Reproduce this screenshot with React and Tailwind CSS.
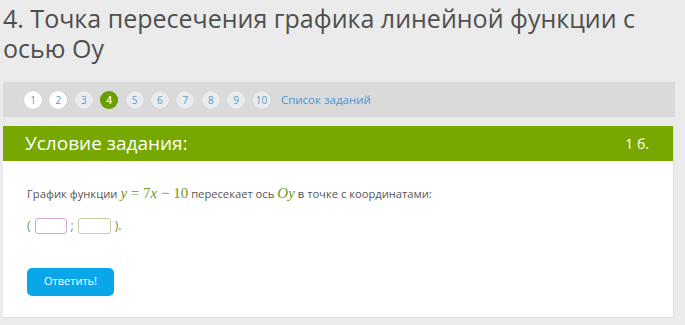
import React from "react";

const steps = [1, 2, 3, 4, 5, 6, 7, 8, 9, 10];

const Step = ({ n }) => {
  // current task = 4, already visited = 1, 2
  let cls = "bg-[#e9ecee] text-[#5b9bcb]";
  if (n === 4) cls = "bg-[#6a9e00] text-white font-semibold";
  else if (n <= 2) cls = "bg-white text-[#5b9bcb]";
  return (
    <div
      className={`w-[18px] h-[18px] rounded-full flex items-center justify-center text-[10px] leading-none shadow-[0_0_1px_rgba(0,0,0,0.15)] ${cls}`}
    >
      {n}
    </div>
  );
};

const M = ({ children }) => (
  <span className="text-[#6a9a1b] italic text-[15px] font-['Liberation_Serif',serif]">
    {children}
  </span>
);

const N = ({ children }) => (
  <span className="text-[#6a9a1b] text-[15px] font-['Liberation_Serif',serif]">
    {children}
  </span>
);

export default function App() {
  return (
    <div className="w-[685px] h-[325px] bg-[#ebebeb] font-['Open_Sans',sans-serif] text-[#555] overflow-hidden">
      {/* Title */}
      <h1 className="pl-[3px] pt-[3px] text-[25px] leading-[30px] text-[#4f4f4f]">
        4. Точка пересечения графика линейной функции с осью Oy
      </h1>

      {/* Task navigation */}
      <div className="mt-[19px] ml-[3px] w-[672px] h-[35px] bg-[#dadada] flex items-center pl-[21px] gap-[7.4px]">
        {steps.map((n) => (
          <Step key={n} n={n} />
        ))}
        <span className="ml-[3px] text-[11.5px] text-[#4d95cf]">Список заданий</span>
      </div>

      {/* Task card */}
      <div className="mt-[9px] ml-[3px] w-[671px] bg-white border-r border-b border-[#dcdcdc]">
        <div className="h-[35px] bg-[#77a800] flex items-center justify-between pl-[22px] pr-[24px] text-white">
          <span className="text-[19px]">Условие задания:</span>
          <span className="text-[14px]">1 б.</span>
        </div>
        <div className="pl-[24px] pt-[21px] pb-[21px] text-[11.2px]">
          <p className="flex items-baseline gap-[3px]">
            <span>График функции</span>
            <span>
              <M>y</M>
              <N> = 7</N>
              <M>x</M>
              <N> − 10</N>
            </span>
            <span>пересекает ось</span>
            <M>Oy</M>
            <span>в точке с координатами:</span>
          </p>
          <div className="mt-[12px] flex items-center gap-[4px] text-[12px] text-[#7a8a50]">
            <span>(</span>
            <span className="w-[32px] h-[16px] rounded-[3px] border border-[#d7a3cf]" />
            <span>;</span>
            <span className="w-[33px] h-[16px] rounded-[3px] border border-[#c4d2a4]" />
            <span>).</span>
          </div>
          <button className="mt-[33px] w-[87px] h-[28px] rounded-[5px] bg-[#0aa6ea] text-white text-[11px]">
            Ответить!
          </button>
        </div>
      </div>
    </div>
  );
}
